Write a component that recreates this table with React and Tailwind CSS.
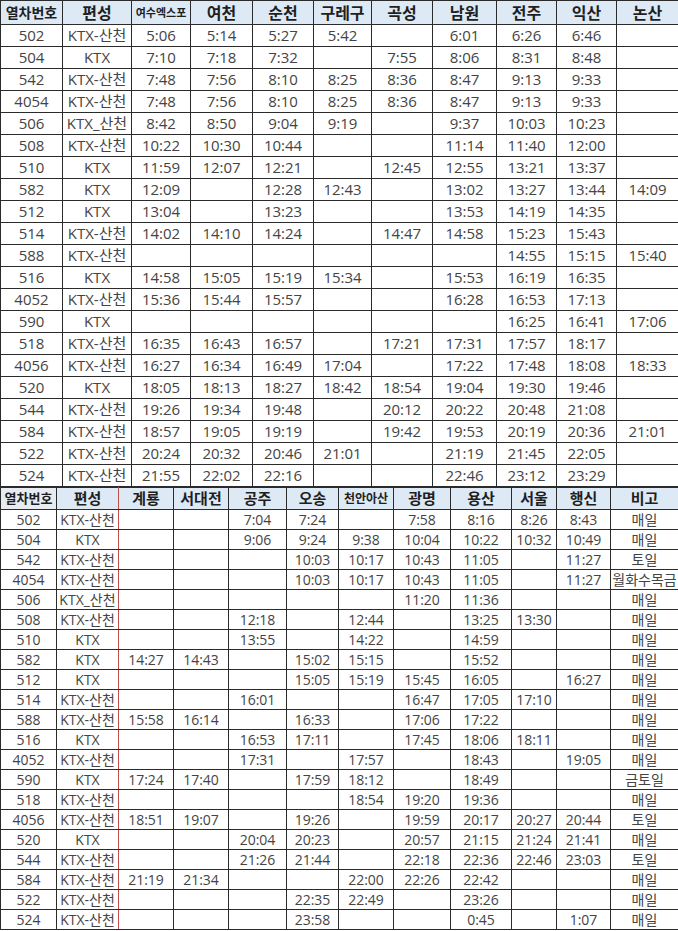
import React from 'react'

const topCols = [62, 69, 59, 62, 61, 58, 61, 64, 60, 60, 62]
const topHead = ['열차번호', '편성', '여수엑스포', '여천', '순천', '구레구', '곡성', '남원', '전주', '익산', '논산']

const topRows = [
  ['502', 'KTX-산천', '5:06', '5:14', '5:27', '5:42', '', '6:01', '6:26', '6:46', ''],
  ['504', 'KTX', '7:10', '7:18', '7:32', '', '7:55', '8:06', '8:31', '8:48', ''],
  ['542', 'KTX-산천', '7:48', '7:56', '8:10', '8:25', '8:36', '8:47', '9:13', '9:33', ''],
  ['4054', 'KTX-산천', '7:48', '7:56', '8:10', '8:25', '8:36', '8:47', '9:13', '9:33', ''],
  ['506', 'KTX_산천', '8:42', '8:50', '9:04', '9:19', '', '9:37', '10:03', '10:23', ''],
  ['508', 'KTX-산천', '10:22', '10:30', '10:44', '', '', '11:14', '11:40', '12:00', ''],
  ['510', 'KTX', '11:59', '12:07', '12:21', '', '12:45', '12:55', '13:21', '13:37', ''],
  ['582', 'KTX', '12:09', '', '12:28', '12:43', '', '13:02', '13:27', '13:44', '14:09'],
  ['512', 'KTX', '13:04', '', '13:23', '', '', '13:53', '14:19', '14:35', ''],
  ['514', 'KTX-산천', '14:02', '14:10', '14:24', '', '14:47', '14:58', '15:23', '15:43', ''],
  ['588', 'KTX-산천', '', '', '', '', '', '', '14:55', '15:15', '15:40'],
  ['516', 'KTX', '14:58', '15:05', '15:19', '15:34', '', '15:53', '16:19', '16:35', ''],
  ['4052', 'KTX-산천', '15:36', '15:44', '15:57', '', '', '16:28', '16:53', '17:13', ''],
  ['590', 'KTX', '', '', '', '', '', '', '16:25', '16:41', '17:06'],
  ['518', 'KTX-산천', '16:35', '16:43', '16:57', '', '17:21', '17:31', '17:57', '18:17', ''],
  ['4056', 'KTX-산천', '16:27', '16:34', '16:49', '17:04', '', '17:22', '17:48', '18:08', '18:33'],
  ['520', 'KTX', '18:05', '18:13', '18:27', '18:42', '18:54', '19:04', '19:30', '19:46', ''],
  ['544', 'KTX-산천', '19:26', '19:34', '19:48', '', '20:12', '20:22', '20:48', '21:08', ''],
  ['584', 'KTX-산천', '18:57', '19:05', '19:19', '', '19:42', '19:53', '20:19', '20:36', '21:01'],
  ['522', 'KTX-산천', '20:24', '20:32', '20:46', '21:01', '', '21:19', '21:45', '22:05', ''],
  ['524', 'KTX-산천', '21:55', '22:02', '22:16', '', '', '22:46', '23:12', '23:29', ''],
]

const botCols = [56, 62, 55, 55, 58, 52, 55, 57, 61, 45, 54, 68]
const botHead = ['열차번호', '편성', '계룡', '서대전', '공주', '오송', '천안아산', '광명', '용산', '서울', '행신', '비고']

const botRows = [
  ['502', 'KTX-산천', '', '', '7:04', '7:24', '', '7:58', '8:16', '8:26', '8:43', '매일'],
  ['504', 'KTX', '', '', '9:06', '9:24', '9:38', '10:04', '10:22', '10:32', '10:49', '매일'],
  ['542', 'KTX-산천', '', '', '', '10:03', '10:17', '10:43', '11:05', '', '11:27', '토일'],
  ['4054', 'KTX-산천', '', '', '', '10:03', '10:17', '10:43', '11:05', '', '11:27', '월화수목금'],
  ['506', 'KTX_산천', '', '', '', '', '', '11:20', '11:36', '', '', '매일'],
  ['508', 'KTX-산천', '', '', '12:18', '', '12:44', '', '13:25', '13:30', '', '매일'],
  ['510', 'KTX', '', '', '13:55', '', '14:22', '', '14:59', '', '', '매일'],
  ['582', 'KTX', '14:27', '14:43', '', '15:02', '15:15', '', '15:52', '', '', '매일'],
  ['512', 'KTX', '', '', '', '15:05', '15:19', '15:45', '16:05', '', '16:27', '매일'],
  ['514', 'KTX-산천', '', '', '16:01', '', '', '16:47', '17:05', '17:10', '', '매일'],
  ['588', 'KTX-산천', '15:58', '16:14', '', '16:33', '', '17:06', '17:22', '', '', '매일'],
  ['516', 'KTX', '', '', '16:53', '17:11', '', '17:45', '18:06', '18:11', '', '매일'],
  ['4052', 'KTX-산천', '', '', '17:31', '', '17:57', '', '18:43', '', '19:05', '매일'],
  ['590', 'KTX', '17:24', '17:40', '', '17:59', '18:12', '', '18:49', '', '', '금토일'],
  ['518', 'KTX-산천', '', '', '', '', '18:54', '19:20', '19:36', '', '', '매일'],
  ['4056', 'KTX-산천', '18:51', '19:07', '', '19:26', '', '19:59', '20:17', '20:27', '20:44', '토일'],
  ['520', 'KTX', '', '', '20:04', '20:23', '', '20:57', '21:15', '21:24', '21:41', '매일'],
  ['544', 'KTX-산천', '', '', '21:26', '21:44', '', '22:18', '22:36', '22:46', '23:03', '토일'],
  ['584', 'KTX-산천', '21:19', '21:34', '', '', '22:00', '22:26', '22:42', '', '', '매일'],
  ['522', 'KTX-산천', '', '', '', '22:35', '22:49', '', '23:26', '', '', '매일'],
  ['524', 'KTX-산천', '', '', '', '23:58', '', '', '0:45', '', '1:07', '매일'],
]

const font = { fontFamily: '"Open Sans", "Noto Sans CJK KR", sans-serif' }

const App = () => {
  return (
    <div className="w-[678px] bg-white text-[#444444]" style={font}>
      <table className="w-[678px] table-fixed border-collapse">
        <colgroup>
          {topCols.map((w, i) => (
            <col key={i} style={{ width: w }} />
          ))}
        </colgroup>
        <thead>
          <tr className="h-[24px]">
            {topHead.map((h, i) => (
              <th
                key={i}
                className={`border border-[#2b2b2b] bg-[#dde9f5] p-0 font-bold text-[#1f1f1f] leading-none ${
                  i === 2 ? 'text-[11px]' : i === 0 ? 'text-[14px]' : 'text-[16px]'
                }`}
              >
                {h}
              </th>
            ))}
          </tr>
        </thead>
        <tbody>
          {topRows.map((r, ri) => (
            <tr key={ri} className="h-[22px]">
              {r.map((c, ci) => (
                <td key={ci} className="border border-[#2b2b2b] p-0 text-center text-[15px] leading-none">
                  {c}
                </td>
              ))}
            </tr>
          ))}
        </tbody>
      </table>

      <table className="w-[678px] table-fixed border-collapse">
        <colgroup>
          {botCols.map((w, i) => (
            <col key={i} style={{ width: w }} />
          ))}
        </colgroup>
        <thead>
          <tr className="h-[22px]">
            {botHead.map((h, i) => (
              <th
                key={i}
                className={`border border-[#2b2b2b] p-0 font-bold text-[#1f1f1f] leading-none ${
                  i === 0 ? 'bg-[#e6ecf1] text-[13px]' : i === 6 ? 'bg-[#dde9f5] text-[12px]' : 'bg-[#dde9f5] text-[15px]'
                } ${i === 1 ? 'border-r-[#c0504d]' : ''}`}
              >
                {h}
              </th>
            ))}
          </tr>
        </thead>
        <tbody>
          {botRows.map((r, ri) => (
            <tr key={ri} className="h-[20px]">
              {r.map((c, ci) => (
                <td
                  key={ci}
                  className={`border border-[#2b2b2b] p-0 text-center text-[14px] leading-none ${
                    ci === 1 ? 'border-r-[#c0504d]' : ''
                  } ${ci === 11 ? 'text-[13px]' : ''}`}
                >
                  {c}
                </td>
              ))}
            </tr>
          ))}
        </tbody>
      </table>
    </div>
  )
}

export default App
